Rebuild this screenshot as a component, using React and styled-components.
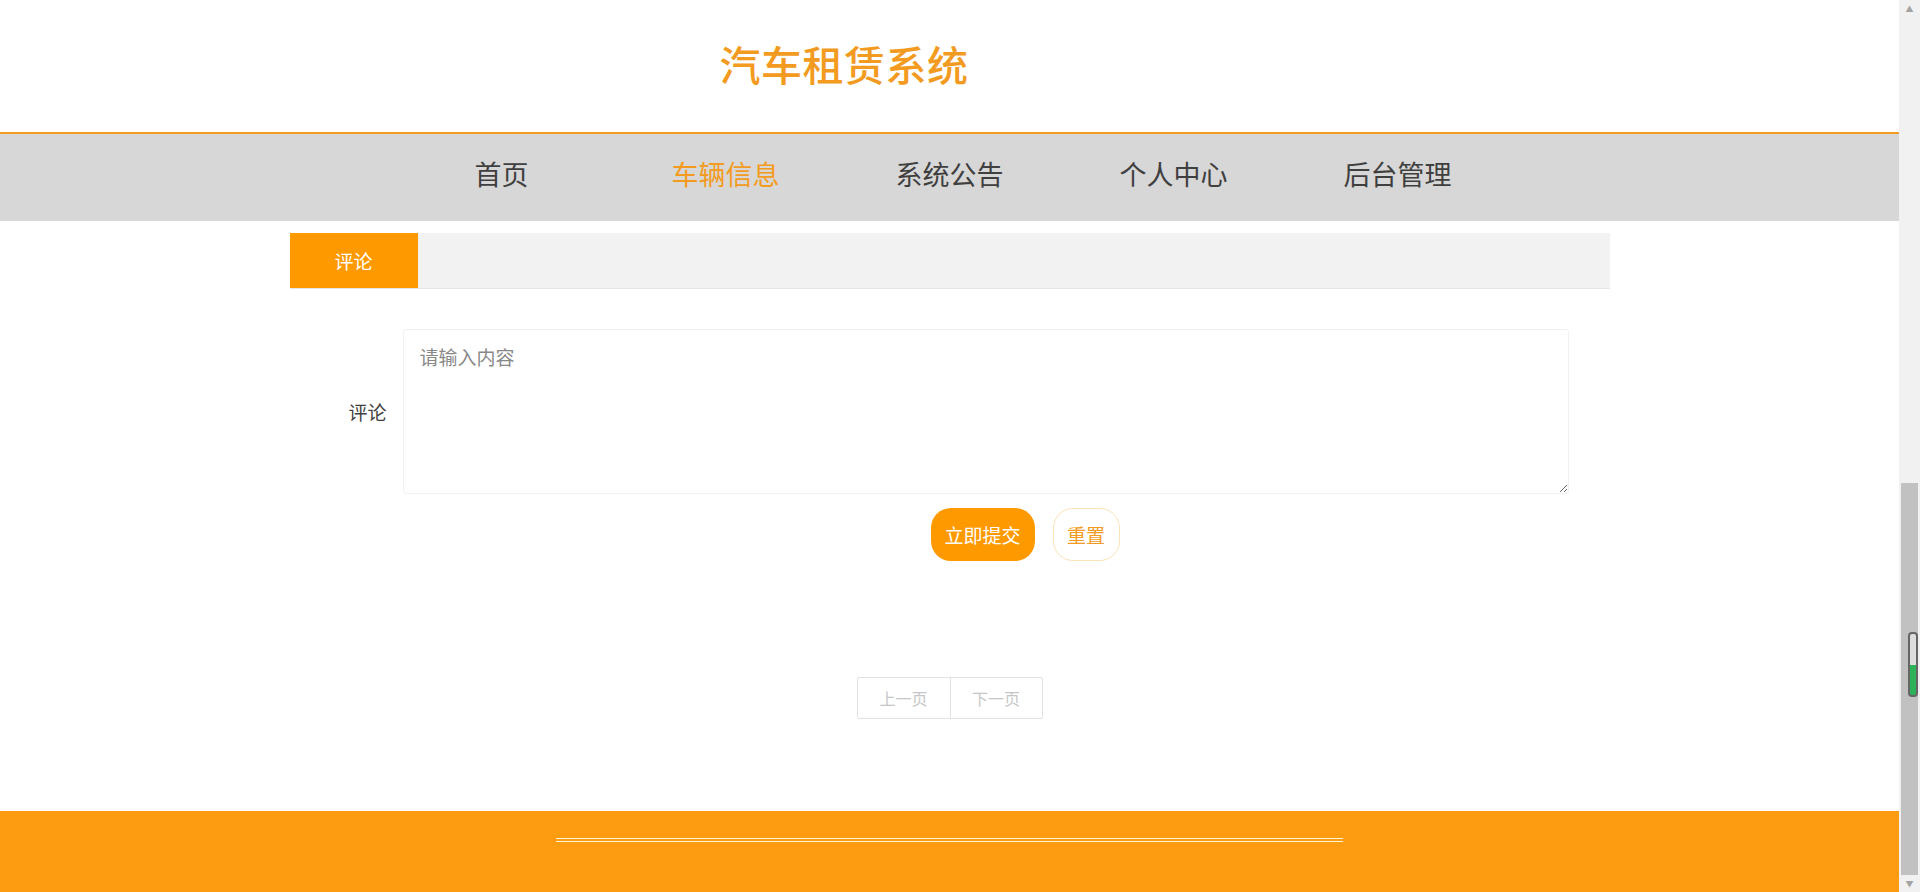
import React from 'react';
import styled, { createGlobalStyle } from 'styled-components';

const GlobalStyle = createGlobalStyle`
  body {
    margin: 0;
    font-family: "Noto Sans CJK SC", "Noto Sans", "Liberation Sans", sans-serif;
    color: #333;
    background: #fff;
  }
  * {
    box-sizing: border-box;
  }
`;

const navItems = ['首页', '车辆信息', '系统公告', '个人中心', '后台管理'];

export default function App() {
  return (
    <>
      <GlobalStyle />
      <Page>
        <Content>
          <Header>
            <HeaderInner>
              <Title>汽车租赁系统</Title>
            </HeaderInner>
          </Header>
          <Nav>
            {navItems.map((item) => (
              <NavItem key={item} $active={item === '车辆信息'}>
                {item}
              </NavItem>
            ))}
          </Nav>
          <Main>
            <TabBar>
              <Tab>评论</Tab>
            </TabBar>
            <FormRow>
              <Label>评论</Label>
              <TextArea placeholder="请输入内容" />
            </FormRow>
            <ButtonRow>
              <SubmitButton>立即提交</SubmitButton>
              <ResetButton>重置</ResetButton>
            </ButtonRow>
            <Pager>
              <PageButton>上一页</PageButton>
              <PageButton>下一页</PageButton>
            </Pager>
          </Main>
          <Footer>
            <FooterLine />
          </Footer>
        </Content>
        <ScrollTrack>
          <Arrow>▲</Arrow>
          <Thumb>
            <Grip />
          </Thumb>
          <Arrow>▼</Arrow>
        </ScrollTrack>
      </Page>
    </>
  );
}

const Page = styled.div`
  height: 892px;
  display: flex;
  overflow: hidden;
`;

const Content = styled.div`
  flex: 1;
  min-width: 0;
  display: flex;
  flex-direction: column;
`;

const ScrollTrack = styled.div`
  width: 21px;
  background: #f1f1f1;
  display: flex;
  flex-direction: column;
  align-items: center;
`;

const Arrow = styled.span`
  height: 17px;
  font-size: 8px;
  line-height: 17px;
  color: #a3a3a3;
`;

const Thumb = styled.div`
  margin-top: auto;
  width: 17px;
  height: 392px;
  background: #c1c1c1;
  display: flex;
  align-items: flex-start;
  justify-content: flex-end;
  padding-top: 149px;
`;

const Grip = styled.div`
  width: 10px;
  height: 65px;
  border: 2px solid #666;
  border-radius: 4px;
  background: linear-gradient(to bottom, #ddd 50%, #2cb35a 50%);
`;

const Header = styled.header`
  height: 134px;
  border-bottom: 2px solid #f39c1f;
  background: #fff;
`;

const HeaderInner = styled.div`
  width: 1320px;
  height: 100%;
  margin: 0 auto;
  padding: 0 0 6px 430px;
  display: flex;
  align-items: center;
`;

const Title = styled.h1`
  margin: 0;
  font-size: 41px;
  font-weight: 500;
  letter-spacing: 0.5px;
  color: #f39b21;
`;

const Nav = styled.nav`
  height: 87px;
  padding-bottom: 7px;
  background: #d7d7d7;
  display: flex;
  justify-content: center;
  align-items: center;
`;

const NavItem = styled.a`
  width: 224px;
  text-align: center;
  font-size: 27px;
  line-height: 40px;
  color: ${(p) => (p.$active ? '#f39b21' : '#3f3f3f')};
  cursor: pointer;
`;

const Main = styled.main`
  width: 1320px;
  margin: 12px auto 0;
  display: flex;
  flex-direction: column;
`;

const TabBar = styled.div`
  height: 56px;
  background: #f2f2f2;
  border-bottom: 1px solid #e6e6e6;
  display: flex;
`;

const Tab = styled.div`
  width: 128px;
  height: 55px;
  background: #ff9900;
  color: #fff;
  font-size: 19px;
  display: flex;
  align-items: center;
  justify-content: center;
`;

const FormRow = styled.div`
  margin-top: 40px;
  padding-right: 41px;
  display: flex;
  align-items: center;
`;

const Label = styled.label`
  width: 113px;
  padding-right: 16px;
  text-align: right;
  font-size: 19px;
  color: #3f3f3f;
`;

const TextArea = styled.textarea`
  flex: 1;
  height: 165px;
  padding: 12px 16px;
  border: 1px solid #f1f1f1;
  border-radius: 3px;
  font-family: inherit;
  font-size: 19px;
  line-height: 30px;
  color: #333;
  outline: none;
  &::placeholder {
    color: #888;
  }
`;

const ButtonRow = styled.div`
  margin-top: 14px;
  padding-left: 641px;
  display: flex;
  gap: 18px;
`;

const BaseButton = styled.button`
  height: 53px;
  padding: 0;
  border-radius: 20px;
  font-family: inherit;
  font-size: 19px;
  cursor: pointer;
`;

const SubmitButton = styled(BaseButton)`
  width: 104px;
  border: none;
  background: #ff9900;
  color: #fff;
`;

const ResetButton = styled(BaseButton)`
  width: 67px;
  border: 1px solid #fbe3b8;
  background: #fff;
  color: #f39b21;
`;

const Pager = styled.div`
  margin: 116px auto 0;
  display: flex;
  border: 1px solid #e2e2e2;
  border-radius: 2px;
`;

const PageButton = styled.span`
  width: 92px;
  height: 40px;
  display: flex;
  align-items: center;
  justify-content: center;
  font-size: 16px;
  color: #c6c6c6;
  & + & {
    border-left: 1px solid #e2e2e2;
  }
`;

const Footer = styled.footer`
  margin-top: auto;
  height: 81px;
  background: #fd9b11;
  padding-top: 27px;
  display: flex;
  justify-content: center;
  align-items: flex-start;
`;

const FooterLine = styled.div`
  width: 787px;
  height: 4px;
  border-top: 1px solid #fff4d6;
  border-bottom: 1px solid #fff4d6;
`;
